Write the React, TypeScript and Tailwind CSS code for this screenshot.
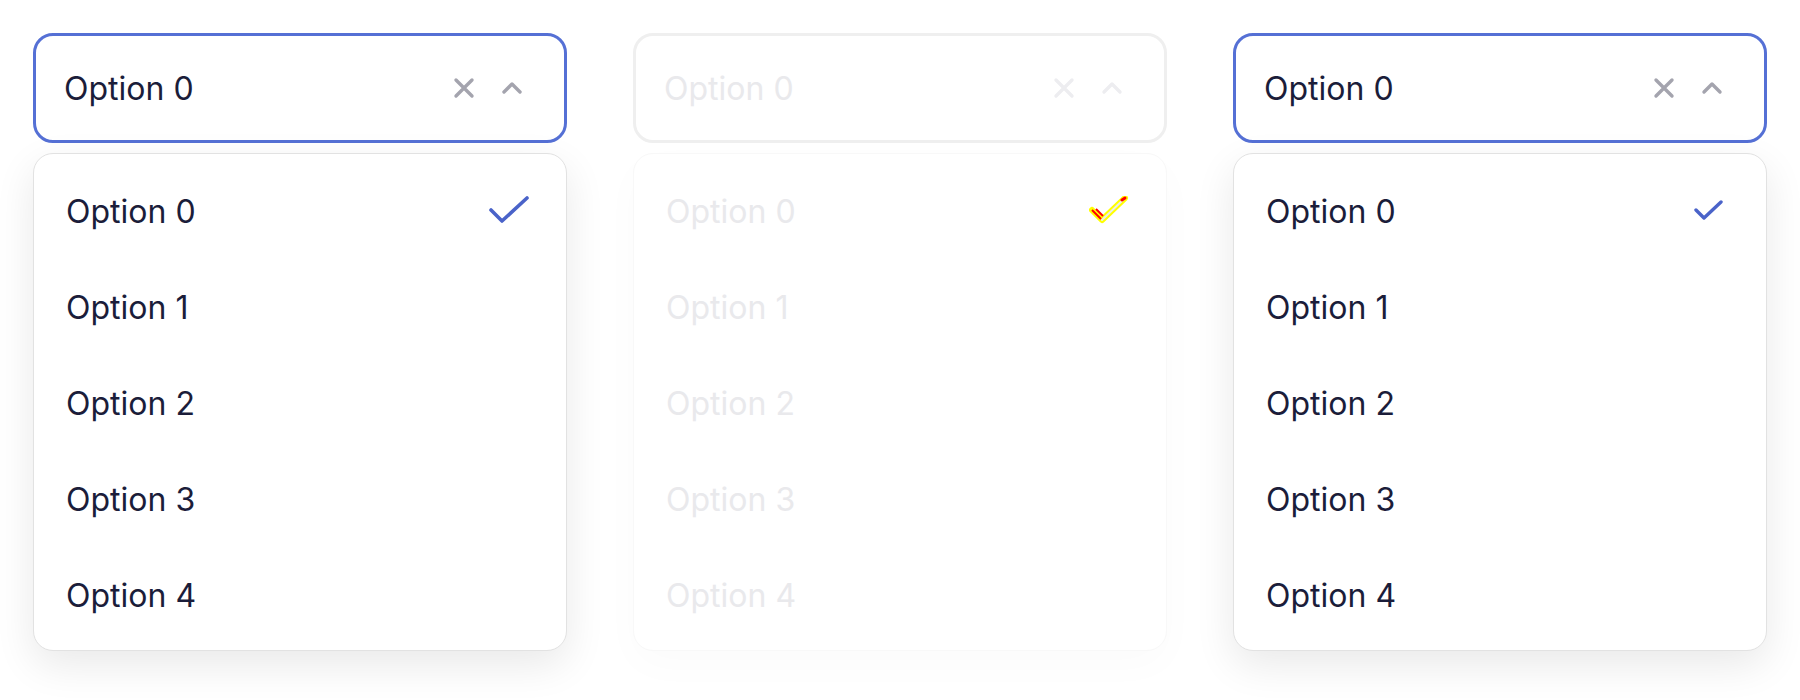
import React from 'react';

const options = ['Option 0', 'Option 1', 'Option 2', 'Option 3', 'Option 4'];

type Variant = 'active' | 'disabled' | 'small';

const ClearIcon = ({ color }: { color: string }) => (
  <svg width="24" height="24" viewBox="0 0 24 24" fill="none">
    <path d="M4 4L20 20M20 4L4 20" stroke={color} strokeWidth="3.4" strokeLinecap="round" />
  </svg>
);

const ChevronUp = ({ color }: { color: string }) => (
  <svg width="24" height="24" viewBox="0 0 24 24" fill="none">
    <path d="M4 16L12 8L20 16" stroke={color} strokeWidth="3.4" strokeLinecap="round" strokeLinejoin="round" />
  </svg>
);

const CheckIcon = ({ variant }: { variant: Variant }) => {
  if (variant === 'small') {
    return (
      <svg width="30" height="22" viewBox="0 0 30 22" fill="none">
        <path d="M2 11L10 19L27 3" stroke="#4a63c9" strokeWidth="3.4" strokeLinecap="round" strokeLinejoin="round" />
      </svg>
    );
  }
  if (variant === 'disabled') {
    // odd highlighted check as seen in the disabled column
    return (
      <svg width="40" height="28" viewBox="0 0 40 28" fill="none">
        <path d="M3 14L13 24L36 2" stroke="#ffff00" strokeWidth="6" strokeLinecap="round" strokeLinejoin="round" />
        <path d="M13 24L36 2" stroke="#ececec" strokeWidth="2" strokeLinecap="round" />
        <path d="M3 14L12 23" stroke="#ff0000" strokeWidth="2" />
        <path d="M7 13L14 20" stroke="#ff0000" strokeWidth="2" />
        <path d="M33 4L36 2" stroke="#ff0000" strokeWidth="3" strokeLinecap="round" />
      </svg>
    );
  }
  return (
    <svg width="40" height="28" viewBox="0 0 40 28" fill="none">
      <path d="M2 14L13 25L38 2" stroke="#4a63c9" strokeWidth="3.6" strokeLinecap="round" strokeLinejoin="round" />
    </svg>
  );
};

const SelectColumn = ({ variant }: { variant: Variant }) => {
  const disabled = variant === 'disabled';
  const textColor = disabled ? 'text-[#e9e9ec]' : 'text-[#1b1d3a]';
  const iconColor = disabled ? '#ededf0' : '#a4a4ae';

  return (
    <div className="flex flex-col">
      {/* Select input */}
      <div
        className={
          disabled
            ? 'h-[110px] rounded-[20px] border-[3px] border-[#efefef] flex items-center pl-[28px] pr-[40px]'
            : 'h-[110px] rounded-[20px] border-[3px] border-[#5570d5] flex items-center pl-[28px] pr-[40px]'
        }
      >
        <span className={`pt-[2px] text-[32px] ${textColor}`}>Option 0</span>
        <div className="ml-auto flex items-center gap-[24px]">
          <ClearIcon color={iconColor} />
          <ChevronUp color={iconColor} />
        </div>
      </div>

      {/* Listbox */}
      <div
        className={
          disabled
            ? 'mt-[10px] rounded-[20px] border border-[#f8f8f8] bg-white py-[8px] shadow-[0_14px_40px_rgba(0,0,0,0.02)]'
            : 'mt-[10px] rounded-[20px] border border-[#e2e2e2] bg-white py-[8px] shadow-[0_14px_40px_rgba(0,0,0,0.09)]'
        }
      >
        {options.map((opt, i) => (
          <div key={opt} className="h-[96px] flex items-center pl-[32px] pr-[37px]">
            <span className={`pt-[3px] text-[32px] ${textColor}`}>{opt}</span>
            {i === 0 && (
              <div className="ml-auto w-[40px] flex items-center justify-center">
                <CheckIcon variant={variant} />
              </div>
            )}
          </div>
        ))}
      </div>
    </div>
  );
};

const App = () => {
  return (
    <div
      className="min-h-[700px] bg-white pt-[33px] px-[33px]"
      style={{ fontFamily: 'Inter, "Noto Sans", sans-serif' }}
    >
      <div className="grid grid-cols-3 gap-[66px]">
        <SelectColumn variant="active" />
        <SelectColumn variant="disabled" />
        <SelectColumn variant="small" />
      </div>
    </div>
  );
};

export default App;
